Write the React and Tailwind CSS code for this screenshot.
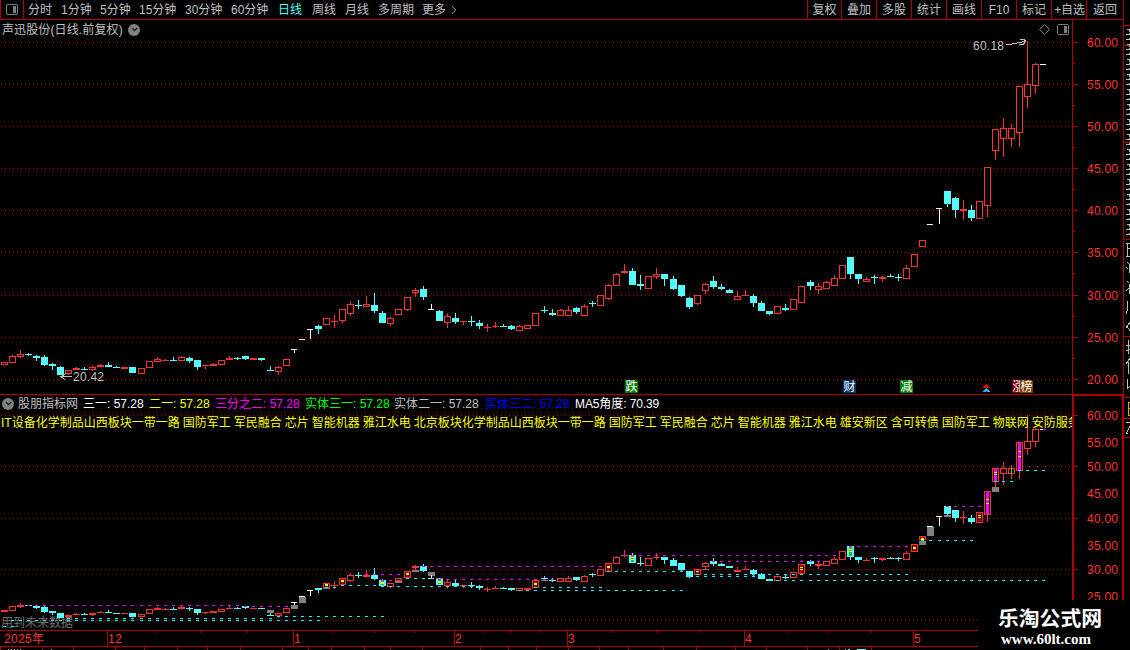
import { ChevronDown, ChevronRight } from 'lucide-react'

const RED = '#ff3232'
const CYAN = '#54fcfc'
const LINE = '#b00000'

// [center x, kind, high, body top, body bottom, low]
// kind: r = rising, c = falling, w = unchanged / limit
const candles = [
  [4, 'r', 362, 362, 365, 365], [12, 'r', 355, 356, 363, 363], [20, 'r', 350, 354, 357, 358],
  [28, 'c', 353, 354, 355, 356], [36, 'c', 355, 356, 358, 361], [44, 'c', 355, 357, 365, 366],
  [52, 'c', 363, 364, 366, 370], [60, 'c', 366, 367, 375, 375], [68, 'r', 370, 370, 374, 375],
  [76, 'r', 367, 368, 370, 370], [84, 'c', 367, 369, 370, 370], [92, 'r', 366, 367, 370, 371],
  [100, 'r', 364, 365, 367, 367], [108, 'c', 362, 365, 367, 367], [116, 'c', 366, 367, 368, 368],
  [124, 'r', 367, 367, 369, 369], [132, 'c', 367, 367, 373, 373], [141, 'r', 368, 368, 374, 374],
  [149, 'r', 361, 361, 368, 368], [157, 'r', 357, 359, 362, 362], [165, 'r', 359, 360, 361, 361],
  [173, 'c', 357, 360, 361, 361], [181, 'r', 356, 357, 361, 361], [189, 'c', 357, 358, 361, 363],
  [197, 'c', 360, 360, 367, 370], [205, 'r', 365, 365, 366, 369], [213, 'r', 363, 364, 366, 366],
  [221, 'r', 360, 360, 365, 365], [229, 'r', 356, 358, 360, 360], [237, 'c', 357, 358, 359, 360],
  [245, 'c', 356, 356, 359, 360], [253, 'r', 358, 358, 360, 360], [261, 'c', 358, 358, 360, 361],
  [270, 'c', 366, 370, 371, 371], [278, 'r', 366, 367, 372, 375], [286, 'r', 359, 359, 366, 366],
  [294, 'w', 349, 349, 350, 353], [302, 'w', 339, 339, 340, 340], [310, 'w', 329, 329, 330, 339],
  [318, 'c', 325, 326, 329, 334], [326, 'r', 318, 318, 325, 325], [334, 'r', 315, 321, 322, 328],
  [342, 'r', 309, 309, 321, 323], [350, 'r', 301, 304, 314, 316], [358, 'c', 300, 305, 306, 309],
  [366, 'r', 296, 304, 307, 307], [374, 'c', 293, 305, 311, 313], [382, 'c', 311, 313, 323, 323],
  [390, 'r', 317, 318, 324, 326], [398, 'r', 309, 309, 315, 315], [407, 'r', 297, 297, 310, 311],
  [415, 'r', 288, 290, 293, 297], [423, 'c', 286, 289, 297, 300], [431, 'w', 304, 309, 310, 310],
  [439, 'c', 310, 311, 321, 321], [447, 'r', 313, 316, 323, 328], [455, 'c', 313, 318, 322, 324],
  [463, 'r', 321, 321, 322, 325], [471, 'c', 316, 321, 322, 326], [479, 'c', 320, 323, 326, 329],
  [487, 'r', 324, 327, 328, 332], [495, 'r', 322, 326, 327, 328], [503, 'c', 324, 326, 327, 327],
  [511, 'c', 325, 326, 329, 330], [519, 'r', 325, 326, 331, 331], [527, 'r', 325, 325, 329, 329],
  [535, 'r', 313, 313, 326, 326], [544, 'c', 306, 310, 311, 313], [552, 'c', 309, 313, 315, 316],
  [560, 'r', 309, 310, 316, 316], [568, 'r', 306, 310, 316, 316], [576, 'c', 307, 308, 312, 314],
  [584, 'r', 304, 306, 316, 316], [592, 'c', 301, 303, 304, 307], [600, 'r', 295, 295, 306, 306],
  [608, 'r', 284, 285, 299, 300], [616, 'r', 273, 274, 286, 286], [624, 'r', 264, 271, 273, 274],
  [632, 'c', 268, 271, 285, 285], [640, 'c', 275, 284, 286, 290], [648, 'r', 276, 276, 289, 289],
  [656, 'r', 268, 274, 277, 279], [664, 'c', 274, 274, 279, 286], [673, 'c', 276, 279, 289, 290],
  [681, 'c', 285, 285, 296, 297], [689, 'c', 297, 298, 307, 309], [697, 'r', 295, 295, 304, 305],
  [705, 'r', 283, 284, 291, 294], [713, 'c', 276, 281, 287, 289], [721, 'c', 284, 287, 289, 290],
  [729, 'c', 289, 290, 293, 293], [737, 'r', 291, 296, 300, 300], [745, 'r', 290, 295, 296, 296],
  [753, 'c', 294, 296, 303, 307], [761, 'c', 301, 303, 311, 311], [769, 'c', 311, 311, 314, 315],
  [777, 'r', 306, 306, 314, 314], [785, 'c', 304, 308, 310, 311], [793, 'r', 299, 299, 310, 310],
  [801, 'r', 286, 286, 303, 303], [810, 'c', 280, 282, 286, 290], [818, 'r', 283, 286, 290, 294],
  [826, 'r', 281, 282, 289, 289], [834, 'r', 275, 278, 286, 286], [842, 'r', 265, 265, 279, 279],
  [850, 'c', 257, 257, 274, 279], [858, 'c', 274, 274, 279, 284], [866, 'r', 277, 279, 282, 282],
  [874, 'c', 275, 277, 278, 284], [882, 'r', 276, 277, 279, 282], [890, 'c', 274, 276, 277, 277],
  [898, 'c', 274, 277, 278, 281], [906, 'r', 265, 268, 279, 279], [914, 'r', 254, 254, 267, 267],
  [922, 'r', 240, 240, 247, 247], [930, 'w', 224, 224, 225, 225], [939, 'w', 208, 208, 209, 224],
  [947, 'c', 191, 191, 204, 207], [955, 'c', 197, 198, 210, 218], [963, 'r', 200, 209, 211, 220],
  [971, 'c', 205, 210, 218, 221], [979, 'r', 201, 201, 219, 219], [987, 'r', 167, 167, 206, 217],
  [995, 'r', 129, 129, 151, 160], [1003, 'r', 118, 128, 139, 157], [1011, 'r', 124, 128, 139, 147],
  [1019, 'r', 86, 86, 133, 147], [1027, 'r', 41, 84, 97, 108], [1035, 'r', 63, 64, 86, 94],
  [1043, 'w', 64, 64, 65, 65],
]

// main panel y -> indicator panel y
const toSub = (y) => Math.round(415.3 + (y - 42) * 0.6087)

const subCandles = candles.map(([x, kind, hi, top, bot, lo]) => {
  const t = toSub(top)
  const b = Math.max(toSub(bot), t + 1)
  return [x, kind, Math.min(toSub(hi), t), t, b, Math.max(toSub(lo), b)]
})

// [from x, to x, y, color]
const levels = [
  [20, 237, 605, '#ff00ff'], [245, 286, 606, '#ff00ff'], [68, 270, 618, '#00ffff'],
  [12, 320, 620, '#00ffff'], [4, 12, 626, '#00ffff'], [278, 384, 616, '#00ffff'],
  [366, 400, 574, '#ff00ff'], [382, 391, 580, '#ff00ff'], [342, 376, 585, '#00ffff'],
  [326, 334, 587, '#00ffff'], [423, 602, 566, '#ff00ff'], [439, 553, 579, '#ff00ff'],
  [407, 431, 578, '#00ffff'], [382, 472, 586, '#00ffff'], [535, 601, 587, '#00ffff'],
  [519, 683, 590, '#00ffff'], [608, 683, 571, '#00ffff'], [624, 835, 555, '#ff00ff'],
  [713, 828, 561, '#ff00ff'], [697, 907, 574, '#00ffff'], [689, 754, 576, '#00ffff'],
  [769, 1044, 580, '#00ffff'], [850, 907, 546, '#ff00ff'], [922, 972, 540, '#00ffff'],
  [947, 980, 506, '#ff00ff'], [995, 1012, 481, '#00ffff'], [1019, 1044, 470, '#00ffff'],
]

const grayBlocks = [
  [270, 610, 3], [294, 605, 4], [302, 597, 6], [326, 586, 3], [398, 581, 2], [415, 570, 2],
  [431, 572, 4], [439, 578, 1], [544, 580, 1], [705, 569, 1], [922, 541, 4], [930, 527, 9],
  [947, 515, 2], [995, 487, 5],
]

// [x, fill, yellow stripe offsets from the body top]
const signals = [
  [326, '#b00000', [1, 2]], [342, '#b00000', [2, 3]], [382, '#30b040', [2, 3]],
  [407, '#b00000', [2, 3]], [439, '#30b040', [2, 3]], [535, '#b00000', [3, 4]],
  [608, '#b00000', [3, 4]], [632, '#30b040', [2, 4]], [697, '#b00000', [2]],
  [801, '#b00000', [3, 5]], [850, '#30b040', [3, 5]], [914, '#b00000', [3, 4]],
  [922, '#b00000', [2, 3]], [979, '#b00000', [3, 5]], [987, '#ff00ff', [8, 12]],
  [995, '#ff00ff', [4, 6]], [1019, '#ff00ff', [9, 14]],
]

const periods = [
  ['分时', 'w-[33px]'], ['1分钟', 'w-[39px]'], ['5分钟', 'w-[39px]'], ['15分钟', 'w-[46px]'],
  ['30分钟', 'w-[46px]'], ['60分钟', 'w-[47px]'], ['日线', 'w-[34px] text-[#54fcfc]'],
  ['周线', 'w-[33px]'], ['月线', 'w-[33px]'], ['多周期', 'w-[44px]'], ['更多', 'w-[25px]'],
]

const tools = ['复权', '叠加', '多股', '统计', '画线', 'F10', '标记', '+自选', '返回']

const indicators = [
  ['三一: 57.28', 'w-[66px] text-white'],
  ['二一: 57.28', 'w-[66px] text-[#ffff00]'],
  ['三分之二: 57.28', 'w-[90px] text-[#ff00ff]'],
  ['实体三一: 57.28', 'w-[89px] text-[#00ff00]'],
  ['实体二一: 57.28', 'w-[91px] text-[#c0c0c0]'],
  ['实体三二: 57.28', 'w-[90px] text-[#0000ff]'],
  ['MA5角度: 70.39', 'w-[90px] tracking-[-0.1px] text-white'],
]

const sectors =
  'IT设备化学制品山西板块一带一路 国防军工 军民融合 芯片 智能机器 雅江水电 北京板块化学制品山西板块一带一路 国防军工 军民融合 芯片 智能机器 雅江水电 雄安新区 含可转债 国防军工 物联网 安防服务'

const mainGrid = [[42, '60.00'], [84, '55.00'], [126, '50.00'], [168, '45.00'], [210, '40.00'], [252, '35.00'], [295, '30.00'], [337, '25.00'], [379, '20.00']]
const subGrid = [415, 466, 518, 569, 620]
const subLabels = [[415, '60.00'], [442, '55.00'], [466, '50.00'], [493, '45.00'], [518, '40.00'], [545, '35.00'], [569, '30.00'], [596, '25.00']]

const months = [[107, '12'], [293, '1'], [454, '2'], [567, '3'], [744, '4'], [913, '5']]
const weekTicks = [154, 200, 247, 333, 374, 414, 482, 511, 539, 611, 656, 700, 786, 829, 871]
const lowerTicks = [0, 42, 73, 115, 144, 177, 207, 240, 282, 308, 331, 364, 390, 422, 480, 508, 536, 568, 599, 628, 663, 696, 735, 766, 807, 839, 871]

function Candle({ x, kind, hi, top, bot, lo }) {
  const color = kind === 'r' ? RED : kind === 'c' ? CYAN : '#ffffff'
  const hollow = kind === 'r' && bot - top > 2
  return (
    <g fill={color}>
      {top > hi && <rect x={x} y={hi} width="1" height={top - hi} />}
      {lo > bot && <rect x={x} y={bot} width="1" height={lo - bot} />}
      {hollow ? (
        <rect x={x - 2.5} y={top + 0.5} width="6" height={bot - top - 1} fill="#000" stroke={color} />
      ) : (
        <rect x={x - 3} y={top} width={kind === 'w' ? 6 : 7} height={bot - top} />
      )}
    </g>
  )
}

function GridLine({ y }) {
  return <line x1="1" x2="1072" y1={y + 0.5} y2={y + 0.5} stroke="#a80000" strokeDasharray="1 3" />
}

function AxisLabel({ y, children }) {
  return (
    <text x="1087" y={y + 5} fill={RED} fontSize="12" textLength="31">
      {children}
    </text>
  )
}

function Badge({ x, fill, width = 13, children }) {
  return (
    <g>
      <path d={`M${x} 380h${width - 2}l2 2v11h-${width}z`} fill={fill} />
      <text x={x + 0.5} y="391" fontSize="12" fill="#fff">{children}</text>
    </g>
  )
}

function MainChart() {
  return (
    <svg className="block shrink-0" width="1124" height="374" viewBox="0 20 1124 374" shapeRendering="crispEdges">
      {mainGrid.map(([y]) => <GridLine key={y} y={y} />)}
      {candles.map(([x, kind, hi, top, bot, lo]) => (
        <Candle key={x} x={x} kind={kind} hi={hi} top={top} bot={bot} lo={lo} />
      ))}

      {/* Price axis */}
      <rect x="1072" y="20" width="1" height="374" fill={LINE} />
      <rect x="1123" y="20" width="1" height="374" fill={LINE} />
      {mainGrid.map(([y, label]) => (
        <g key={label}>
          <rect x="1073" y={y} width="5" height="1" fill={LINE} />
          {y < 379 && <rect x="1073" y={y + 21} width="2" height="1" fill={LINE} />}
          <AxisLabel y={y}>{label}</AxisLabel>
        </g>
      ))}

      {/* High / low marks */}
      <g fill="none" stroke="#c0c0c0">
        <path d="M1006 44.5h4l4-1 6-1 6-1.5M1020 39.500h4l2 1.500l-3 4M1019 44.500h4" />
        <path d="M60 376.500h12M66 373.500l-5 3 4 3" />
      </g>
      <text x="973" y="50" fontSize="12" fill="#c0c0c0" textLength="31">60.18</text>
      <text x="73" y="381" fontSize="12" fill="#c0c0c0" textLength="31">20.42</text>

      {/* Event badges */}
      <Badge x={625} fill="#008000">跌</Badge>
      <Badge x={843} fill="#003a70">财</Badge>
      <Badge x={900} fill="#008000">减</Badge>
      <path d="M983 388l3.500-4 3.500 4h-2l-1.500-1-1.500 1z" fill="#f00" />
      <path d="M983 392l3.500-4 3.500 4h-2l-1.500-1-1.500 1z" fill="#20c0ff" />
      <Badge x={1012} fill="#800000">涨</Badge>
      <Badge x={1020} fill="#804000">榜</Badge>

      <g fill="none" stroke="#808080" shapeRendering="auto">
        <path d="M1044.500 24.500l5 5-5 5-5-5z" />
        <rect x="1057.500" y="24.500" width="11" height="10" rx="1" />
        <path d="M1065.500 26v7" strokeWidth="3" />
      </g>
    </svg>
  )
}

function SubChart() {
  return (
    <svg className="block shrink-0" width="1124" height="256" viewBox="0 394 1124 256" shapeRendering="crispEdges">
      {subGrid.map(y => <GridLine key={y} y={y} />)}
      <text x="1" y="627" fontSize="12" fill="#707070">用到未来数据</text>

      {grayBlocks.map(([x, y, h]) => (
        <rect key={x} x={x - 3} y={y} width="7" height={h} fill="#808080" />
      ))}
      {subCandles.map(([x, kind, hi, top, bot, lo]) => (
        <Candle key={x} x={x} kind={kind} hi={hi} top={top} bot={bot} lo={lo} />
      ))}
      {signals.map(([x, fill, stripes]) => {
        const [, , , top, bot] = subCandles.find(c => c[0] === x)
        return (
          <g key={x}>
            <rect x={x - 1} y={top + 1} width="3" height={bot - top - 2} fill={fill} />
            {stripes.map(s => <rect key={s} x={x - 1} y={top + s} width="3" height="1" fill="#ffff00" />)}
          </g>
        )
      })}
      <rect x="1011" y="468" width="1" height="6" fill="#00ff00" />

      {/* Support and resistance levels */}
      {levels.map(([from, to, y, color]) =>
        candles
          .filter(([x]) => x >= from && x <= to)
          .map(([x]) => <rect key={`${x}-${y}`} x={x - 1} y={y} width="3" height="1" fill={color} />)
      )}
      <rect x="1043" y="429" width="3" height="1" fill="#ff00ff" />

      {/* Price axis */}
      <rect x="0" y="394" width="1124" height="1" fill={LINE} />
      <rect x="1072" y="395" width="52" height="1" fill={LINE} />
      <rect x="1072" y="395" width="2" height="205" fill={LINE} />
      <rect x="1122" y="395" width="2" height="205" fill={LINE} />
      {subLabels.map(([y, label], i) => (
        <g key={label}>
          <rect x="1074" y={y} width={i % 2 ? 1 : 4} height="1" fill={LINE} />
          <AxisLabel y={y}>{label}</AxisLabel>
        </g>
      ))}

      {/* Date axis */}
      <rect x="0" y="630" width="978" height="1" fill={LINE} />
      <rect x="0" y="646" width="978" height="1" fill={LINE} />
      <text x="4" y="643" fontSize="12" fill={RED} textLength="40">2025年</text>
      {months.map(([x, label]) => (
        <g key={label}>
          <rect x={x} y="631" width="1" height="15" fill={LINE} />
          <text x={x + 1} y="643" fontSize="12" fill={RED} textLength={label.length * 7}>{label}</text>
        </g>
      ))}
      {weekTicks.map(x => <rect key={x} x={x} y="631" width="1" height="2" fill={LINE} />)}
      {lowerTicks.map(x => <rect key={x} x={x} y="647" width="1" height="3" fill={LINE} />)}
      <path d="M8 649.500h13M51 649.500h1M828 649.500h1M845 649.500h2" stroke="#c0c0c0" strokeDasharray="1 2" />
      <path d="M848 649.500h2M857 649.500h9" stroke={CYAN} />
    </svg>
  )
}

// Left edge of the neighbouring quote panel
function SideStrip() {
  const marks = []
  for (let y = 29; y < 235; y += 5) marks.push(y)
  return (
    <svg className="block shrink-0" width="6" height="630" viewBox="1124 20 6 630" shapeRendering="crispEdges">
      {[25, 45, 142, 239, 336, 397, 418, 437].map(y => (
        <rect key={y} x="1124" y={y} width="6" height="1" fill={LINE} />
      ))}
      <g stroke="#c0c0c0" fill="none">
        {marks.map((y, i) => (
          <path key={y} d={i % 3 ? `M1126 ${y + 0.5}h3l1-1` : `M1127 ${y + 0.5}h3M1129.500 ${y}v3`} />
        ))}
        <path d="M1126 243.500h4M1127.500 243v13M1127 248.500h3M1126 256.500h4M1127 262l2 2M1126 267l2 2M1129 264v9M1127 281l2 2M1129.500 284v10M1126 291l3-3M1127.500 301v7l-1 6M1130 322l-4 6M1127 326l3 5M1126 345.500h4M1128.500 340v14M1126 351l4-2M1130 358l-4 6M1128.500 362v12M1127.500 379v9l3-2" />
        <path d="M1126 422.500h4M1130 426l-4 8M1126 433h2" />
      </g>
      <path d="M1130 402.500h-1.500v13h1.500M1128 408.500h2" stroke="#c0c000" fill="none" />
    </svg>
  )
}

function DropMark() {
  return (
    <span className="flex h-3 w-3 items-center justify-center rounded-full bg-[#808080] text-black">
      <ChevronDown size={9} strokeWidth={3} />
    </span>
  )
}

function App() {
  return (
    <div className="relative h-[650px] w-[1130px] overflow-hidden bg-black font-['Liberation_Sans','Noto_Sans_CJK_SC',sans-serif] text-[12px] leading-[18px] text-[#c0c0c0]">
      {/* Period bar */}
      <div className="flex h-5">
        <div className="flex h-5 w-[1124px] border-x border-b border-[#b00000]">
          <div className="flex w-[23px] items-center justify-center border-r border-[#b00000]">
            <div className="flex h-[11px] w-3 justify-end rounded-xs border border-[#808080] p-px">
              <div className="w-[3px] bg-[#808080]" />
            </div>
          </div>
          <div className="ml-1 flex flex-1 items-center whitespace-nowrap">
            {periods.map(([label, cls]) => (
              <button key={label} className={`text-left ${cls}`}>{label}</button>
            ))}
            <ChevronRight size={14} strokeWidth={1.5} />
          </div>
          <div className="flex">
            {tools.map((label, i) => (
              <button
                key={label}
                className={`border-l border-[#b00000] text-center whitespace-nowrap ${i === 0 ? 'w-[34px]' : i === 8 ? 'w-[37px]' : 'w-[35px]'} ${i === 7 ? 'pl-px tracking-[-0.2px]' : ''}`}
              >
                {label}
              </button>
            ))}
          </div>
        </div>
      </div>

      <div className="flex">
        <div className="flex flex-col">
          {/* Daily chart */}
          <div className="relative">
            <MainChart />
            <div className="absolute top-0 left-0.5 flex items-center gap-[5px] whitespace-nowrap">
              <span className="w-[121px] pt-px tracking-[0.12px]">声迅股份(日线.前复权)</span>
              <DropMark />
            </div>
          </div>

          {/* Indicator chart */}
          <div className="relative">
            <SubChart />
            <div className="absolute top-0 left-0.5 flex items-center whitespace-nowrap">
              <DropMark />
              <span className="ml-1 w-[65px] pt-px">股朋指标网</span>
              {indicators.map(([label, cls]) => (
                <span key={label} className={`pt-px ${cls}`}>{label}</span>
              ))}
            </div>
            <div className="absolute top-5 left-px w-[1071px] overflow-hidden whitespace-nowrap text-[#ffff00] [word-spacing:-0.33px]">
              {sectors}
            </div>
          </div>
        </div>
        <SideStrip />
      </div>

      {/* Site mark */}
      <div className="absolute right-0 bottom-0 h-[50px] w-[152px] bg-black pl-5 font-bold whitespace-nowrap text-white">
        <div className="mt-[7px] text-[20.8px] leading-6">乐淘公式网</div>
        <div className="ml-[3px] font-['Liberation_Serif',serif] text-[15px] leading-4">www.60lt.com</div>
      </div>
    </div>
  )
}

export default App
